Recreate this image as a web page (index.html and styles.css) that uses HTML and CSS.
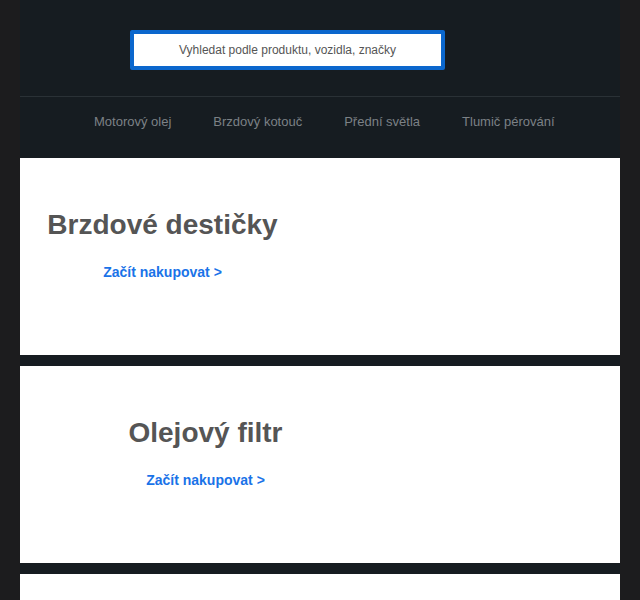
FILE: index.html
```html
<!DOCTYPE html>
<html lang="cs">
<head>
<meta charset="utf-8">
<title>Autodíly</title>
<link rel="stylesheet" href="styles.css">
</head>
<body>
<div class="page">
  <header class="header">
    <div class="search">Vyhledat podle produktu, vozidla, značky</div>
  </header>
  <nav class="nav">
    <a class="nav-link" href="#">Motorový olej</a>
    <a class="nav-link" href="#">Brzdový kotouč</a>
    <a class="nav-link" href="#">Přední světla</a>
    <a class="nav-link" href="#">Tlumič pérování</a>
  </nav>
  <section class="card">
    <div class="promo promo-one">
      <h2 class="promo-title">Brzdové destičky</h2>
      <a class="promo-link" href="#">Začít nakupovat &gt;</a>
    </div>
  </section>
  <section class="card">
    <div class="promo promo-two">
      <h2 class="promo-title">Olejový filtr</h2>
      <a class="promo-link" href="#">Začít nakupovat &gt;</a>
    </div>
  </section>
  <section class="card"></section>
</div>
</body>
</html>
```
FILE: styles.css
```css
html, body {
  margin: 0;
  padding: 0;
}
body {
  background: #1c1c1e;
  font-family: "Liberation Sans", Arial, sans-serif;
}
.page {
  width: 600px;
  margin: 0 auto;
  background: #161c21;
  min-height: 600px;
}
.header {
  height: 97px;
  box-sizing: border-box;
  padding: 30px 0 0 110px;
  border-bottom: 1px solid #2a3136;
}
.search {
  width: 315px;
  height: 40px;
  box-sizing: border-box;
  border: 4px solid #0b67cd;
  border-radius: 2px;
  background: #ffffff;
  color: #555555;
  font-size: 12px;
  display: flex;
  align-items: center;
  justify-content: center;
}
.nav {
  height: 61px;
  box-sizing: border-box;
  padding: 17px 0 0 74px;
  display: flex;
  gap: 42px;
  align-items: flex-start;
}
.nav-link {
  color: #7c8186;
  font-size: 13px;
  line-height: 15px;
  text-decoration: none;
}
.card {
  background: #ffffff;
  height: 197px;
  margin-bottom: 11px;
  box-sizing: border-box;
  padding-top: 51px;
}
.promo {
  text-align: center;
}
.promo-one {
  width: 285px;
}
.promo-two {
  width: 371px;
}
.promo-title {
  margin: 0;
  font-size: 28px;
  line-height: 32px;
  font-weight: bold;
  color: #555555;
}
.promo-link {
  display: inline-block;
  margin-top: 23px;
  font-size: 14px;
  line-height: 16px;
  font-weight: bold;
  color: #1a73e8;
  text-decoration: none;
}
```
